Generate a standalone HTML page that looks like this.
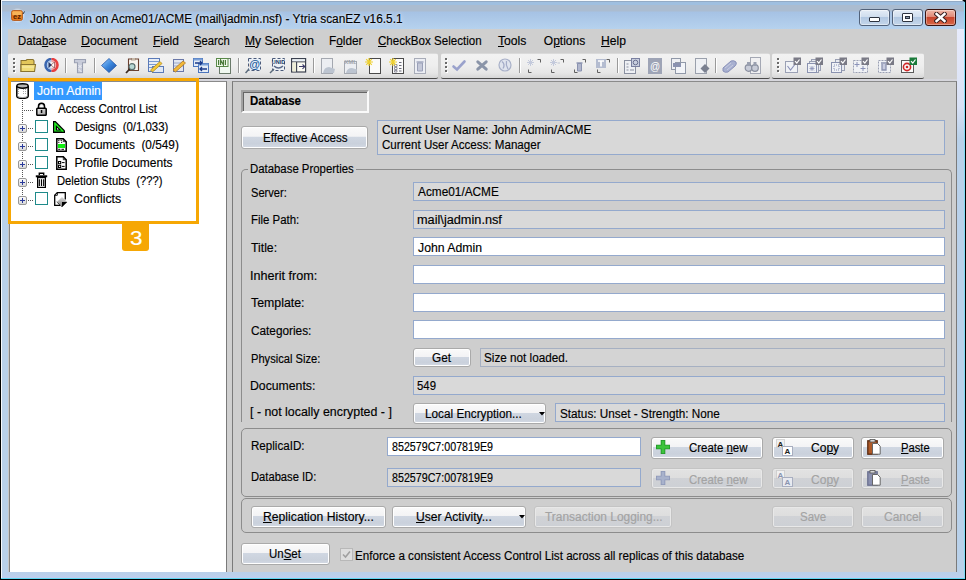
<!DOCTYPE html>
<html><head><meta charset="utf-8">
<style>
html,body{margin:0;padding:0;}
body{width:966px;height:580px;position:relative;overflow:hidden;background:#000;font-family:"Liberation Sans",sans-serif;}
.a{position:absolute;box-sizing:border-box;}
.t{-webkit-text-stroke:0.15px currentColor;position:absolute;white-space:pre;line-height:20px;transform-origin:0 0;font-family:"Liberation Sans",sans-serif;}
u{text-decoration:underline;text-underline-offset:1px;}
.btn{position:absolute;box-sizing:border-box;border:1px solid #aaaaaa;border-radius:3px;background:linear-gradient(#fafafa 0%,#f3f3f5 45%,#d0d7e2 46%,#cad1dc 80%,#d4dae4 100%);box-shadow:inset 0 0 0 1px #fff;}
.btnd{position:absolute;box-sizing:border-box;border:1px solid #c4c4c4;border-radius:3px;background:linear-gradient(#e2e2e2 0%,#dedede 46%,#d0d2d6 47%,#cdd0d5 100%);box-shadow:inset 0 0 0 1px #e8e8e8;}
.fld{position:absolute;box-sizing:border-box;border:1px solid #94a9cd;background:#fff;}
.fldd{position:absolute;box-sizing:border-box;border:1px solid #94a9cd;background:#d9d9d9;}
.grp{position:absolute;box-sizing:border-box;border:1px solid #8c8c8c;border-radius:5px;}
.tb{position:absolute;box-sizing:border-box;height:26px;top:53px;border-radius:3px 3px 2px 2px;background:linear-gradient(#dadada 0px,#dadada 1px,#f2f2f2 1px,#eeeeee 50%,#e6e6e6 80%,#d6d6d6 100%);border-bottom:1px solid #4a4a4a;}
.ic{position:absolute;}
.sep{position:absolute;top:57px;width:1px;height:17px;background:#8a8a8a;border-right:1px solid #fff;}
.grip{position:absolute;top:57px;width:3px;height:16px;background:radial-gradient(circle at 1.5px 1.5px,#5a5a5a 1px,transparent 1.4px) 0 0/3px 4px;}
</style></head><body>
<!-- window frame -->
<div class="a" style="left:1px;top:0;width:964px;height:579px;background:#b9d1ea;"></div>
<div class="a" style="left:1px;top:0;width:962px;height:1px;background:#f6f9fc;"></div>
<div class="a" style="left:1px;top:0;width:1px;height:579px;background:#f6f9fc;"></div>
<div class="a" style="left:2px;top:1px;width:962px;height:28px;background:linear-gradient(#93abc6 0px,#93abc6 1px,#9fbfe0 1px,#9fbfe0 4px,#abbcd0 4px,#abbcd0 10px,#a6c2e4 11px,#b6d2ee 28px);"></div>
<div class="a" style="left:964px;top:0;width:1px;height:579px;background:#7fdcf4;"></div>
<div class="a" style="left:1px;top:578px;width:964px;height:1px;background:#5fd8f2;"></div>
<div class="a" style="left:2px;top:572px;width:962px;height:6px;background:linear-gradient(#b9d0ea,#bcd0ec 70%,#c4ccf0);"></div>
<div class="a" style="left:962px;top:0;width:4px;height:3px;background:#000;clip-path:polygon(0 0,100% 0,100% 100%);"></div>
<div class="a" style="left:957px;top:29px;width:7px;height:110px;background:linear-gradient(rgba(240,240,255,.85),rgba(230,232,250,.7) 70%,rgba(230,232,250,0));"></div>
<!-- caption buttons -->
<div class="a" style="left:859px;top:9px;width:31px;height:17px;border:1px solid #52627a;border-radius:3px;background:linear-gradient(#e4ecf6 0%,#d0deee 45%,#b2c8e2 50%,#c4d6ea 100%);box-shadow:inset 0 0 0 1px rgba(255,255,255,.45);"></div>
<div class="a" style="left:869px;top:17px;width:11px;height:5px;border:1px solid #2e3440;border-radius:1px;background:#fff;"></div>
<div class="a" style="left:892px;top:9px;width:31px;height:17px;border:1px solid #52627a;border-radius:3px;background:linear-gradient(#e4ecf6 0%,#d0deee 45%,#b2c8e2 50%,#c4d6ea 100%);box-shadow:inset 0 0 0 1px rgba(255,255,255,.45);"></div>
<div class="a" style="left:902px;top:13px;width:11px;height:9px;border:1px solid #2e3440;border-radius:1px;background:#fff;"></div>
<div class="a" style="left:905px;top:16px;width:5px;height:3px;border:1px solid #2e3440;background:#8a98aa;"></div>
<div class="a" style="left:925px;top:9px;width:31px;height:17px;border:1px solid #3a1410;border-radius:3px;background:linear-gradient(#f0b8a8 0%,#e08a78 45%,#c8462e 50%,#d86848 100%);box-shadow:inset 0 0 0 1px rgba(255,255,255,.35);"></div>
<svg class="a" style="left:934px;top:12px" width="13" height="11" viewBox="0 0 13 11"><path d="M2.5 2 L10.5 9 M10.5 2 L2.5 9" stroke="#3a2020" stroke-width="4.4" stroke-linecap="square"/><path d="M2.5 2 L10.5 9 M10.5 2 L2.5 9" stroke="#fff" stroke-width="2.4" stroke-linecap="square"/></svg>
<!-- client -->
<div class="a" style="left:8px;top:29px;width:949px;height:543px;background:#cfcfcf;"></div>
<!-- toolbars -->
<div class="tb" style="left:8px;width:430px;"></div>
<div class="tb" style="left:441px;width:329px;"></div>
<div class="tb" style="left:772px;width:152px;"></div>
<div class="a" style="left:13px;top:58px;width:2px;height:2px;background:#6a6a6a;box-shadow:1px 1px 0 #fff;"></div>
<div class="a" style="left:13px;top:62px;width:2px;height:2px;background:#6a6a6a;box-shadow:1px 1px 0 #fff;"></div>
<div class="a" style="left:13px;top:66px;width:2px;height:2px;background:#6a6a6a;box-shadow:1px 1px 0 #fff;"></div>
<div class="a" style="left:13px;top:70px;width:2px;height:2px;background:#6a6a6a;box-shadow:1px 1px 0 #fff;"></div>
<div class="a" style="left:445px;top:58px;width:2px;height:2px;background:#6a6a6a;box-shadow:1px 1px 0 #fff;"></div>
<div class="a" style="left:445px;top:62px;width:2px;height:2px;background:#6a6a6a;box-shadow:1px 1px 0 #fff;"></div>
<div class="a" style="left:445px;top:66px;width:2px;height:2px;background:#6a6a6a;box-shadow:1px 1px 0 #fff;"></div>
<div class="a" style="left:445px;top:70px;width:2px;height:2px;background:#6a6a6a;box-shadow:1px 1px 0 #fff;"></div>
<div class="a" style="left:777px;top:58px;width:2px;height:2px;background:#6a6a6a;box-shadow:1px 1px 0 #fff;"></div>
<div class="a" style="left:777px;top:62px;width:2px;height:2px;background:#6a6a6a;box-shadow:1px 1px 0 #fff;"></div>
<div class="a" style="left:777px;top:66px;width:2px;height:2px;background:#6a6a6a;box-shadow:1px 1px 0 #fff;"></div>
<div class="a" style="left:777px;top:70px;width:2px;height:2px;background:#6a6a6a;box-shadow:1px 1px 0 #fff;"></div>
<div class="a" style="left:65px;top:58px;width:1px;height:15px;background:#9a9a9a;box-shadow:1px 0 0 #fff;"></div>
<div class="a" style="left:94px;top:58px;width:1px;height:15px;background:#9a9a9a;box-shadow:1px 0 0 #fff;"></div>
<div class="a" style="left:238px;top:58px;width:1px;height:15px;background:#9a9a9a;box-shadow:1px 0 0 #fff;"></div>
<div class="a" style="left:313px;top:58px;width:1px;height:15px;background:#9a9a9a;box-shadow:1px 0 0 #fff;"></div>
<div class="a" style="left:519px;top:58px;width:1px;height:15px;background:#9a9a9a;box-shadow:1px 0 0 #fff;"></div>
<div class="a" style="left:617px;top:58px;width:1px;height:15px;background:#9a9a9a;box-shadow:1px 0 0 #fff;"></div>
<div class="a" style="left:715px;top:58px;width:1px;height:15px;background:#9a9a9a;box-shadow:1px 0 0 #fff;"></div>
<svg class="ic" style="left:20px;top:58px" width="17" height="15" viewBox="0 0 17 15"><path d="M1 2.5 H6 L7 1.5 H13 L14 3 V13.5 H1Z" fill="#e2c65a" stroke="#8a7430" stroke-width="1.1"/><path d="M1 6.5 H15.5 L14.5 13.5 H1Z" fill="#f0dc78" stroke="#8a7430" stroke-width="1.1"/><path d="M2 9 H14" stroke="#f8eeb0" stroke-width="1"/></svg>
<svg class="ic" style="left:44px;top:58px" width="15" height="14" viewBox="0 0 15 14"><path d="M7.5 1 A6 6 0 0 0 7.5 13" fill="none" stroke="#3a66b0" stroke-width="2.6"/><path d="M7.5 3.2 A3.8 3.8 0 0 0 7.5 10.8" fill="none" stroke="#a8c8f0" stroke-width="1.6"/><path d="M7.5 1 A6 6 0 0 1 7.5 13" fill="none" stroke="#e84040" stroke-width="2.6"/><path d="M7.5 3.2 A3.8 3.8 0 0 1 7.5 10.8" fill="none" stroke="#f0a0a0" stroke-width="1.6"/><path d="M4.5 4 L8 7 L4.5 10z" fill="#2a3a6a"/><path d="M10.5 4 L7 7 L10.5 10z" fill="#fff" stroke="#803030" stroke-width=".6"/></svg>
<svg class="ic" style="left:73px;top:58px" width="14" height="16" viewBox="0 0 14 16"><path d="M1.5 1.5 H12.5 V4.8 H9.5 V14.8 H4.5 V4.8 H1.5Z" fill="#c8ccda" stroke="#9aa0b2" stroke-width="1.1"/><path d="M5.5 7 L8.5 10 M8.5 7 L5.5 10 M5.5 11 L8.5 14" stroke="#eef0f6" stroke-width="1"/></svg>
<svg class="ic" style="left:101px;top:58px" width="16" height="15" viewBox="0 0 16 15"><defs><linearGradient id="dg" x1="0" y1="0" x2="1" y2="1"><stop offset="0" stop-color="#9fd0ff"/><stop offset=".5" stop-color="#3a86dc"/><stop offset="1" stop-color="#1a4aa0"/></linearGradient></defs><path d="M8 0.5 L15.5 7.5 L8 14.5 L0.5 7.5Z" fill="url(#dg)" stroke="#2a5aa8" stroke-width=".8"/></svg>
<svg class="ic" style="left:124px;top:58px" width="16" height="16" viewBox="0 0 16 16"><path d="M4.5 1 H14.5 V12.5 H4.5 Z" fill="#f8f4ee" stroke="#6a4030" stroke-width="1.1"/><rect x="7.5" y="0" width="4" height="2" fill="#e0d8c8" stroke="#8a7060" stroke-width=".6"/><circle cx="8" cy="8.7" r="3" fill="#b8d8d4" stroke="#5a7070" stroke-width="1.2"/><path d="M5.8 11 L2 15" stroke="#3a2a20" stroke-width="1.8"/></svg>
<svg class="ic" style="left:148px;top:58px" width="16" height="15" viewBox="0 0 16 15"><rect x="0.5" y="0.5" width="11" height="13" fill="#e8eef6" stroke="#5a7ab8"/><path d="M1 3.5 H11 M1 6.5 H11 M1 9.5 H11" stroke="#7a9ad0" stroke-width="1.2"/><rect x="4.5" y="8.5" width="11" height="6" fill="#e0e8f4" stroke="#5a7ab8"/><path d="M2.5 12 L12 3.5 L14 5.5 L4.5 14 Z" fill="#f2c838" stroke="#b08a28" stroke-width=".8"/></svg>
<svg class="ic" style="left:172px;top:58px" width="15" height="15" viewBox="0 0 15 15"><rect x="1.5" y="1.5" width="10" height="12" fill="#e2e6f0" stroke="#6a78a8"/><path d="M2 5 H11 M2 8 H11" stroke="#9aa8c8"/><path d="M1 12 L11 3 L13.5 5 L3.5 14 Z" fill="#f2b838" stroke="#b07a28" stroke-width=".8"/></svg>
<svg class="ic" style="left:193px;top:58px" width="16" height="15" viewBox="0 0 16 15"><rect x="0.5" y="0.5" width="9" height="8" fill="#e4ecf6" stroke="#4a74bc"/><rect x="0.5" y="0.5" width="9" height="2" fill="#7aa0d8"/><rect x="5.5" y="5.5" width="10" height="9" fill="#e4ecf6" stroke="#4a74bc"/><rect x="5.5" y="5.5" width="10" height="2" fill="#7aa0d8"/><path d="M2 5 H9 M7 3 L9 5 L7 7" stroke="#1a3a8a" stroke-width="1.3" fill="none"/><path d="M14 11 H7 M9 9 L7 11 L9 13" stroke="#1a3a8a" stroke-width="1.3" fill="none"/></svg>
<svg class="ic" style="left:216px;top:58px" width="16" height="16" viewBox="0 0 16 16"><rect x="3.5" y="0.5" width="11" height="15" fill="#f0f8f0" stroke="#6a7a6a"/><rect x="0.5" y="0.5" width="11.5" height="8" fill="#f0faea" stroke="#5a8a4a"/><path d="M2.6 2 V7 M4.6 7 V2 L7.4 7 V2 M9.4 2 V7" stroke="#4a7a3a" stroke-width="1.2" fill="none"/></svg>
<svg class="ic" style="left:245px;top:58px" width="16" height="16" viewBox="0 0 16 16"><rect x="3.5" y="0.5" width="12" height="12" fill="#e6eef8" stroke="#4a5a7a" stroke-dasharray="3 2"/><text x="9.5" y="10" font-family="Liberation Sans" font-size="11" font-weight="700" text-anchor="middle" fill="#1a5a9a">@</text><path d="M4 11 L0.5 15" stroke="#5a6a7a" stroke-width="1.5"/></svg>
<svg class="ic" style="left:269px;top:58px" width="16" height="16" viewBox="0 0 16 16"><rect x="3.5" y="0.5" width="12" height="12" fill="#eef2f6" stroke="#4a5a7a" stroke-dasharray="3 2"/><text x="9.5" y="6" font-family="Liberation Sans" font-size="5.5" font-weight="700" text-anchor="middle" fill="#1a3a6a">UNID</text><path d="M5 8 Q9.5 12 14 8" stroke="#5a6a8a" stroke-width="1.5" fill="none"/><path d="M5 11 L1 15" stroke="#5a6a7a" stroke-width="1.5"/></svg>
<svg class="ic" style="left:291px;top:58px" width="16" height="15" viewBox="0 0 16 15"><rect x="0.6" y="0.6" width="14" height="13.4" fill="#fbfbf2" stroke="#3c4250" stroke-width="1.2"/><path d="M1 3.8 H14.6" stroke="#3c4250" stroke-width="1.1"/><rect x="1.5" y="1.4" width="12.4" height="1.8" fill="#e8f0f8"/><path d="M5.6 4 V14" stroke="#3c4250" stroke-width="1.1"/><rect x="1.5" y="4.5" width="3.4" height="9" fill="#eeeed8"/><path d="M8 8.5 H13.5 M11.5 6.5 L13.8 8.6 L11.5 10.8" stroke="#3a3a6a" stroke-width="1.1" fill="none"/></svg>
<svg class="ic" style="left:321px;top:58px" width="15" height="16" viewBox="0 0 15 16"><rect x="0.5" y="0.5" width="11" height="15" fill="#eceef2" stroke="#a4a8b0"/><path d="M2 15 Q3 9 8 9 L14 11 L13 15 Z" fill="#bcc4d0"/></svg>
<svg class="ic" style="left:344px;top:58px" width="14" height="16" viewBox="0 0 14 16"><rect x="0.5" y="3.5" width="12" height="12" fill="#eceef2" stroke="#a4a8b0"/><text x="6.5" y="6" font-family="Liberation Sans" font-size="6" font-weight="700" text-anchor="middle" fill="#a0a4ac">XML</text><path d="M2 15 Q3 10 8 10 L13 11.5 L12 15 Z" fill="#bcc4d0"/></svg>
<svg class="ic" style="left:365px;top:58px" width="17" height="16" viewBox="0 0 17 16"><rect x="4.5" y="0.5" width="11" height="15" fill="#fafafa" stroke="#4a4a4a"/><path d="M4 0 V8 M0 4 H8 M1.2 1.2 L6.8 6.8 M6.8 1.2 L1.2 6.8" stroke="#eed030" stroke-width="1.2"/></svg>
<svg class="ic" style="left:389px;top:58px" width="16" height="16" viewBox="0 0 16 16"><rect x="3.5" y="0.5" width="11" height="15" fill="#fafafa" stroke="#4a4a4a"/><path d="M5.5 6.5 H8 V8.5 H5.5Z M5.5 9.5 H8 V11.5 H5.5Z M5.5 12.5 H8 V14 H5.5Z" fill="none" stroke="#7a7a8a" stroke-width=".8"/><path d="M10 4.5 H12.5 M10 7.5 H12.5 M10 10.5 H12.5 M10 13 H12.5" stroke="#6a6a7a"/><path d="M4 0 V8 M0 4 H8 M1.2 1.2 L6.8 6.8 M6.8 1.2 L1.2 6.8" stroke="#eed030" stroke-width="1.2"/></svg>
<svg class="ic" style="left:414px;top:58px" width="12" height="16" viewBox="0 0 12 16"><rect x="0.5" y="0.5" width="11" height="15" fill="#eceef4" stroke="#a8acb8"/><path d="M2.5 4 H9.5" stroke="#9aa0b8" stroke-width="1.3"/><path d="M3.5 5 H8.5 V13 H3.5Z" fill="#c4c8d8" stroke="#9aa0b8" stroke-width="1"/></svg>
<svg class="ic" style="left:451px;top:59px" width="16" height="13" viewBox="0 0 16 13"><path d="M2.5 7.5 L6 10.5 L13.5 2.5" stroke="#9aa2cc" stroke-width="2.6" fill="none" stroke-linecap="round"/></svg>
<svg class="ic" style="left:475px;top:59px" width="14" height="13" viewBox="0 0 14 13"><path d="M2.8 2.8 L11.2 10.2 M11.2 2.8 L2.8 10.2" stroke="#8a94a8" stroke-width="3" stroke-linecap="round"/></svg>
<svg class="ic" style="left:498px;top:58px" width="14" height="14" viewBox="0 0 14 14"><circle cx="7" cy="7" r="6" fill="#e0e4ee" stroke="#a8b0c8" stroke-width="1.2"/><path d="M4 3.5 Q7.5 6.5 5 10.5 M8.5 3 Q7.5 7 10 11" stroke="#a4acc8" stroke-width="1.3" fill="none"/></svg>
<svg class="ic" style="left:526px;top:58px" width="16" height="16" viewBox="0 0 16 16"><path d="M11.5 1.5 H14.5 V4.5 M2.5 11.5 V14.5 H5.5" stroke="#606060" fill="none" stroke-width="1"/><path d="M4.5 1 V8 M1 4.5 H8 M2 2 L7 7 M7 2 L2 7" stroke="#c4cadc" stroke-width="1"/></svg>
<svg class="ic" style="left:549px;top:58px" width="16" height="16" viewBox="0 0 16 16"><path d="M11.5 1.5 H14.5 V4.5 M2.5 11.5 V14.5 H5.5" stroke="#606060" fill="none" stroke-width="1"/><path d="M4.5 1 V8 M1 4.5 H8 M2 2 L7 7 M7 2 L2 7" stroke="#c4cadc" stroke-width="1"/><path d="M8.5 5 H11" stroke="#c0c6d4"/></svg>
<svg class="ic" style="left:572px;top:58px" width="15" height="16" viewBox="0 0 15 16"><path d="M10.5 1.5 H13.5 V4.5 M2.5 11.5 V14.5 H5.5" stroke="#606060" fill="none" stroke-width="1"/><path d="M4.5 5 H10.5" stroke="#8a92b0" stroke-width="1.4"/><path d="M5.5 5.5 H9.5 V13 H5.5Z" fill="#b0b6cc" stroke="#8a92b0" stroke-width="1"/></svg>
<svg class="ic" style="left:595px;top:58px" width="16" height="16" viewBox="0 0 16 16"><path d="M11.5 1.5 H14.5 V4.5 M2.5 11.5 V14.5 H5.5" stroke="#606060" fill="none" stroke-width="1"/><rect x="1" y="1" width="10" height="9" fill="#b4bcd0"/><path d="M3 3 H9 M6 3 V8.5" stroke="#fff" stroke-width="1.7"/></svg>
<svg class="ic" style="left:624px;top:58px" width="16" height="16" viewBox="0 0 16 16"><rect x="0.5" y="2.5" width="11" height="13" fill="#eef0f4" stroke="#8a90a0"/><path d="M2.5 6 H4.5 M2.5 9 H4.5 M2.5 12 H4.5 M6 12 H10" stroke="#8a90a0"/><rect x="7.5" y="0.5" width="8" height="8" fill="#c8cede" stroke="#7a80a0"/><circle cx="11.5" cy="4.5" r="2.3" fill="none" stroke="#6a7090"/></svg>
<svg class="ic" style="left:648px;top:58px" width="14" height="16" viewBox="0 0 14 16"><rect x="0" y="0" width="14" height="16" fill="#9ea4b6"/><text x="7" y="11.5" font-family="Liberation Sans" font-size="10" text-anchor="middle" fill="#fff">@</text></svg>
<svg class="ic" style="left:671px;top:58px" width="15" height="16" viewBox="0 0 15 16"><rect x="0.5" y="0.5" width="9" height="11" fill="#eef0f4" stroke="#9098a8"/><rect x="4.5" y="4.5" width="10" height="11" fill="#f2f4f8" stroke="#9098a8"/><rect x="2" y="5" width="8" height="4" fill="#8a92b0"/></svg>
<svg class="ic" style="left:695px;top:58px" width="15" height="16" viewBox="0 0 15 16"><rect x="0.5" y="0.5" width="11" height="15" fill="#eef0f4" stroke="#9aa0ac"/><path d="M10 6 L14.5 10.5 L10 15 L5.5 10.5Z" fill="#7a8090"/></svg>
<svg class="ic" style="left:722px;top:59px" width="16" height="14" viewBox="0 0 16 14"><path d="M1 9 L9 2 Q12 1 14 3 Q15 5 13 7 L6 13 Q3 14 1 12 Z" fill="#a8b0d0" stroke="#8890b8"/><path d="M3 9 L9 4 M5 11 L11 6" stroke="#c8cce0"/></svg>
<svg class="ic" style="left:744px;top:57px" width="17" height="17" viewBox="0 0 17 17"><rect x="6.5" y="0.5" width="10" height="16" fill="#f0f0f2" stroke="#a4a8b4"/><circle cx="4.5" cy="11" r="3.3" fill="#c8ccd8" stroke="#8a90a0" stroke-width="1.2"/><circle cx="11" cy="11" r="3.3" fill="#c8ccd8" stroke="#8a90a0" stroke-width="1.2"/><rect x="3" y="5" width="3" height="4" fill="#9aa0b0"/><rect x="9.5" y="5" width="3" height="4" fill="#9aa0b0"/></svg>
<svg class="ic" style="left:785px;top:57px" width="16" height="17" viewBox="0 0 16 17"><rect x="0.5" y="4.5" width="12" height="11" fill="#f0f2f6" stroke="#9aa0b4"/><path d="M2.5 9 L5.5 13 L11 6" stroke="#8a90b8" fill="none" stroke-width="1.1"/><rect x="8.5" y="0.5" width="7.5" height="7.5" fill="#7a7a86"/><path d="M10 4.2 L11.8 6 L14.5 2.5" stroke="#fff" stroke-width="1.2" fill="none"/></svg>
<svg class="ic" style="left:807px;top:57px" width="16" height="17" viewBox="0 0 16 17"><rect x="4.5" y="2.5" width="9" height="11" fill="#e8eaf0" stroke="#9aa0b4"/><rect x="2.5" y="4.5" width="9" height="11" fill="#eceef2" stroke="#9aa0b4"/><rect x="0.5" y="6.5" width="9" height="9" fill="#f0f2f6" stroke="#8a92b0"/><path d="M5 9 V14 M2.5 11.5 H7.5 M3 9.5 L7 13.5 M7 9.5 L3 13.5" stroke="#8a92b8" stroke-width=".8"/><rect x="8.5" y="0.5" width="7.5" height="7.5" fill="#7a7a86"/><path d="M10 4.2 L11.8 6 L14.5 2.5" stroke="#fff" stroke-width="1.2" fill="none"/></svg>
<svg class="ic" style="left:831px;top:57px" width="16" height="17" viewBox="0 0 16 17"><rect x="4.5" y="2.5" width="9" height="11" fill="#e8eaf0" stroke="#9aa0b4"/><rect x="0.5" y="5.5" width="10" height="10" fill="#f0f2f6" stroke="#8a92b0"/><rect x="3" y="8" width="5" height="5" fill="none" stroke="#8a92b8" stroke-dasharray="1 1"/><rect x="8.5" y="0.5" width="7.5" height="7.5" fill="#7a7a86"/><path d="M10 4.2 L11.8 6 L14.5 2.5" stroke="#fff" stroke-width="1.2" fill="none"/></svg>
<svg class="ic" style="left:853px;top:57px" width="16" height="17" viewBox="0 0 16 17"><rect x="0.5" y="3.5" width="14" height="12" fill="#f0f2f6" stroke="#9aa0b4" stroke-dasharray="2 1"/><path d="M4 5 V10 M1.5 7.5 H6.5 M10 9 V14 M7.5 11.5 H12.5" stroke="#8a92b8" stroke-width="1"/><rect x="8.5" y="0.5" width="7.5" height="7.5" fill="#7a7a86"/><path d="M10 4.2 L11.8 6 L14.5 2.5" stroke="#fff" stroke-width="1.2" fill="none"/></svg>
<svg class="ic" style="left:878px;top:57px" width="16" height="17" viewBox="0 0 16 17"><rect x="0.5" y="3.5" width="12" height="12" fill="#f0f2f6" stroke="#9aa0b4" stroke-dasharray="2 1"/><path d="M3 6 H9 M4 7 V13 H8 V7" stroke="#8a92b0" stroke-width="1.3" fill="#c8cce0"/><rect x="8.5" y="0.5" width="7.5" height="7.5" fill="#7a7a86"/><path d="M10 4.2 L11.8 6 L14.5 2.5" stroke="#fff" stroke-width="1.2" fill="none"/></svg>
<svg class="ic" style="left:901px;top:57px" width="16" height="17" viewBox="0 0 16 17"><rect x="0.5" y="3.5" width="12" height="12" fill="#fafafa" stroke="#5a5a5a"/><circle cx="6" cy="10" r="3.6" fill="none" stroke="#d02828" stroke-width="1.6"/><circle cx="6" cy="10" r="1.3" fill="#d02828"/><rect x="8.5" y="0.5" width="7.5" height="7.5" fill="#1a7a3a"/><path d="M10 4.2 L11.8 6 L14.5 2.5" stroke="#fff" stroke-width="1.2" fill="none"/></svg>
<!-- tree panel -->
<div class="a" style="left:8px;top:79px;width:949px;height:2px;background:#d6d6dc;"></div>
<div class="a" style="left:8px;top:81px;width:1px;height:491px;background:#c8c8c8;"></div>
<div class="a" style="left:9px;top:81px;width:218px;height:491px;background:#fff;border-left:1px solid #858585;border-top:1px solid #8a8a8a;border-right:1px solid #7a7a7a;"></div>
<div class="a" style="left:227px;top:81px;width:5px;height:491px;background:#d0d0d0;"></div>
<div class="a" style="left:232px;top:81px;width:725px;height:491px;background:#cecece;border-left:1px solid #7a7a7a;border-top:1px solid #8a8a8a;border-right:1px solid #7a7a7a;"></div>
<!-- tree -->
<div class="a" style="left:34px;top:82px;width:68px;height:18px;background:#3399ff;"></div>
<svg class="ic" style="left:16px;top:83px" width="13" height="16" viewBox="0 0 13 16"><path d="M0.8 3 V13 Q0.8 15.4 6.5 15.4 Q12.2 15.4 12.2 13 V3" fill="#fff" stroke="#000" stroke-width="1.5"/><path d="M1.5 13 Q2 14.5 6.5 14.6 Q11 14.5 11.5 13" fill="none" stroke="#999" stroke-width="1"/><ellipse cx="6.5" cy="3" rx="5.7" ry="2.2" fill="#b4b4b4" stroke="#000" stroke-width="1.5"/><path d="M2.5 6 V12 M7.5 6 V12 M9.5 6 V12" stroke="#aaa" stroke-dasharray="1 1"/></svg>
<svg class="ic" style="left:36px;top:102px" width="11" height="14" viewBox="0 0 11 14"><path d="M2.6 6 V4.2 A2.9 2.9 0 0 1 8.4 4.2 V6" fill="none" stroke="#000" stroke-width="1.7"/><path d="M3.8 6 V4.4 A1.7 1.7 0 0 1 7.2 4.4 V6" fill="none" stroke="#ddd" stroke-width=".7"/><defs><linearGradient id="lk" x1="0" y1="0" x2="1" y2="1"><stop offset="0" stop-color="#eee"/><stop offset="1" stop-color="#999"/></linearGradient></defs><rect x="0.8" y="6.3" width="9.4" height="7" rx=".8" fill="url(#lk)" stroke="#000" stroke-width="1.5"/><rect x="4.8" y="8" width="1.5" height="3" fill="#000"/></svg>
<div class="a" style="left:22px;top:100px;width:1px;height:100px;background:repeating-linear-gradient(#555 0 1px,transparent 1px 2px);"></div>
<div class="a" style="left:24px;top:110px;width:10px;height:1px;background:repeating-linear-gradient(90deg,#555 0 1px,transparent 1px 2px);"></div>
<div class="a" style="left:28px;top:128px;width:6px;height:1px;background:repeating-linear-gradient(90deg,#555 0 1px,transparent 1px 2px);"></div>
<div class="a" style="left:28px;top:146px;width:6px;height:1px;background:repeating-linear-gradient(90deg,#555 0 1px,transparent 1px 2px);"></div>
<div class="a" style="left:28px;top:164px;width:6px;height:1px;background:repeating-linear-gradient(90deg,#555 0 1px,transparent 1px 2px);"></div>
<div class="a" style="left:28px;top:182px;width:6px;height:1px;background:repeating-linear-gradient(90deg,#555 0 1px,transparent 1px 2px);"></div>
<div class="a" style="left:28px;top:200px;width:6px;height:1px;background:repeating-linear-gradient(90deg,#555 0 1px,transparent 1px 2px);"></div>
<div class="a" style="left:18px;top:124px;width:9px;height:9px;border:1px solid #979797;border-radius:2px;background:linear-gradient(#fafafa,#d8d8d8);"></div>
<div class="a" style="left:20px;top:128px;width:5px;height:1px;background:#2a3a9a;"></div><div class="a" style="left:22px;top:126px;width:1px;height:5px;background:#2a3a9a;"></div>
<div class="a" style="left:18px;top:142px;width:9px;height:9px;border:1px solid #979797;border-radius:2px;background:linear-gradient(#fafafa,#d8d8d8);"></div>
<div class="a" style="left:20px;top:146px;width:5px;height:1px;background:#2a3a9a;"></div><div class="a" style="left:22px;top:144px;width:1px;height:5px;background:#2a3a9a;"></div>
<div class="a" style="left:18px;top:160px;width:9px;height:9px;border:1px solid #979797;border-radius:2px;background:linear-gradient(#fafafa,#d8d8d8);"></div>
<div class="a" style="left:20px;top:164px;width:5px;height:1px;background:#2a3a9a;"></div><div class="a" style="left:22px;top:162px;width:1px;height:5px;background:#2a3a9a;"></div>
<div class="a" style="left:18px;top:178px;width:9px;height:9px;border:1px solid #979797;border-radius:2px;background:linear-gradient(#fafafa,#d8d8d8);"></div>
<div class="a" style="left:20px;top:182px;width:5px;height:1px;background:#2a3a9a;"></div><div class="a" style="left:22px;top:180px;width:1px;height:5px;background:#2a3a9a;"></div>
<div class="a" style="left:18px;top:196px;width:9px;height:9px;border:1px solid #979797;border-radius:2px;background:linear-gradient(#fafafa,#d8d8d8);"></div>
<div class="a" style="left:20px;top:200px;width:5px;height:1px;background:#2a3a9a;"></div><div class="a" style="left:22px;top:198px;width:1px;height:5px;background:#2a3a9a;"></div>
<div class="a" style="left:35px;top:120px;width:13px;height:13px;border:1.5px solid #1e8a8a;background:#fff;"></div>
<div class="a" style="left:35px;top:138px;width:13px;height:13px;border:1.5px solid #1e8a8a;background:#fff;"></div>
<div class="a" style="left:35px;top:156px;width:13px;height:13px;border:1.5px solid #1e8a8a;background:#fff;"></div>
<div class="a" style="left:35px;top:192px;width:13px;height:13px;border:1.5px solid #1e8a8a;background:#fff;"></div>
<svg class="ic" style="left:53px;top:121px" width="12" height="12" viewBox="0 0 12 12"><path d="M0 0 H2.6 L12 9.4 V12 H0 Z" fill="#000"/><path d="M1.2 1.3 H2.1 L10.8 10 V10.8 H1.2 Z" fill="#22ee22"/><path d="M2.8 4 L8.4 9.6 H2.8 Z" fill="#000"/><path d="M4 6.8 L5.8 8.6 H4Z" fill="#fff"/><path d="M2 10.8 V10 M4 10.8 V10 M6 10.8 V10 M8 10.8 V10" stroke="#000" stroke-width=".8"/></svg>
<svg class="ic" style="left:56px;top:138px" width="11" height="14" viewBox="0 0 11 14"><path d="M0.8 0.8 H7.3 L10.2 3.7 V13.2 H0.8 Z" fill="#fff" stroke="#000" stroke-width="1.5"/><path d="M7.3 0.8 V3.7 H10.2" fill="none" stroke="#000" stroke-width=".8"/><rect x="2" y="6" width="7" height="4" fill="#11ee11"/><path d="M2.2 2.4 H3.4 M4.6 2.4 H5.8 M2.2 4.3 H3.4 M5 4.3 H6.2 M2.2 11.3 H4.4 M5.4 11.3 H8" stroke="#000" stroke-width="1"/></svg>
<svg class="ic" style="left:56px;top:156px" width="11" height="14" viewBox="0 0 11 14"><path d="M0.8 0.8 H7.3 L10.2 3.7 V13.2 H0.8 Z" fill="#fff" stroke="#000" stroke-width="1.5"/><path d="M7.3 0.8 V3.7 H10.2" fill="none" stroke="#000" stroke-width=".8"/><rect x="2.5" y="5.5" width="2.2" height="2.2" fill="none" stroke="#000" stroke-width="1"/><rect x="2.5" y="9.3" width="2.2" height="2.2" fill="none" stroke="#000" stroke-width="1"/><path d="M5.8 6.6 H8.6 M5.8 10.4 H8.6" stroke="#000" stroke-width="1"/></svg>
<svg class="ic" style="left:35px;top:172px" width="13" height="17" viewBox="0 0 13 17"><path d="M4.3 3 V1.2 H8.7 V3" fill="none" stroke="#000" stroke-width="1.4"/><path d="M0.8 4.3 H12.2" stroke="#000" stroke-width="2"/><path d="M2 5 H11 V16 H2 Z" fill="#000"/><rect x="3.2" y="6.2" width="6.6" height="8.6" fill="#fff"/><path d="M4.3 7.2 V14 M6.5 7.2 V14 M8.7 7.2 V14" stroke="#000" stroke-width="1.2"/></svg>
<svg class="ic" style="left:54px;top:192px" width="14" height="15" viewBox="0 0 14 15"><path d="M3.3 0.7 H11.3 V13.3 H0.7 V3.3 Z" fill="#fff"/><path d="M6 13.3 H0.7 V3.3 L3.3 0.7 H11.3 V7.5" fill="none" stroke="#000" stroke-width="1.3"/><path d="M0.7 3.3 H3.3 V0.7 Z" fill="#e8e8e8" stroke="#000" stroke-width=".9"/><defs><linearGradient id="cf" x1="0" y1="0" x2="0" y2="1"><stop offset="0" stop-color="#d8d8d8"/><stop offset="1" stop-color="#808080"/></linearGradient></defs><path d="M8 5 L13.2 10 L8 15 L2.8 10Z" fill="url(#cf)"/><path d="M8 10 H13.2 L8 15Z" fill="#000"/><path d="M2.8 10 L8 15" stroke="#000" stroke-width="1" stroke-dasharray="1 .7"/></svg>
<div class="a" style="left:10px;top:8px;width:15px;height:15px;border-radius:4px;background:radial-gradient(#fff 40%,rgba(255,255,255,0) 72%);opacity:.8"></div>
<svg class="ic" style="left:11px;top:9px" width="14" height="13" viewBox="0 0 14 13"><rect x="0.5" y="1.5" width="11" height="10" rx="2" fill="#e47a1c" stroke="#b05010" stroke-width=".8"/><rect x="1.3" y="2.3" width="9.4" height="4" rx="1" fill="#f8b458"/><text x="6" y="10" font-family="Liberation Sans" font-size="7.5" font-weight="700" text-anchor="middle" fill="#5a2200">ez</text><path d="M12 5 L13.5 2.5" stroke="#333" stroke-width="1"/></svg>
<!-- right panel content -->
<div class="a" style="left:241px;top:90px;width:128px;height:23px;background:#d6d6d6;border-top:2px solid #a2a2a2;border-left:2px solid #a2a2a2;border-bottom:2px solid #fafafa;border-right:2px solid #fafafa;box-shadow:inset 1px 1px 0 #666;"></div>
<div class="btn" style="left:241px;top:126px;width:127px;height:23px;"></div>
<div class="a" style="left:377px;top:120px;width:568px;height:35px;border:1px solid #94a9cd;background:#d8d8d8;"></div>
<div class="grp" style="left:241px;top:169px;width:711px;height:253px;border-bottom:none;border-radius:5px 5px 0 0;"></div>
<div class="a" style="left:248px;top:163px;width:108px;height:12px;background:#cecece;"></div>
<div class="fldd" style="left:413px;top:182px;width:532px;height:19px;"></div>
<div class="fldd" style="left:413px;top:210px;width:532px;height:19px;"></div>
<div class="fld" style="left:413px;top:237px;width:532px;height:19px;"></div>
<div class="fld" style="left:413px;top:265px;width:532px;height:19px;"></div>
<div class="fld" style="left:413px;top:293px;width:532px;height:19px;"></div>
<div class="fld" style="left:413px;top:320px;width:532px;height:19px;"></div>
<div class="btn" style="left:413px;top:348px;width:58px;height:19px;"></div>
<div class="a" style="left:480px;top:348px;width:465px;height:19px;border:1px solid #a6b0c2;background:#d4d4d4;"></div>
<div class="fldd" style="left:413px;top:376px;width:532px;height:19px;"></div>
<div class="btn" style="left:413px;top:403px;width:133px;height:21px;"></div>
<div class="fldd" style="left:555px;top:403px;width:390px;height:19px;"></div>
<div class="grp" style="left:241px;top:428px;width:711px;height:69px;"></div>
<div class="fld" style="left:387px;top:437px;width:254px;height:19px;"></div>
<div class="fldd" style="left:387px;top:468px;width:254px;height:19px;"></div>
<div class="btn" style="left:651px;top:437px;width:112px;height:22px;"></div>
<div class="btn" style="left:772px;top:437px;width:82px;height:22px;"></div>
<div class="btn" style="left:861px;top:437px;width:83px;height:22px;"></div>
<div class="btnd" style="left:651px;top:468px;width:112px;height:21px;"></div>
<div class="btnd" style="left:772px;top:468px;width:82px;height:21px;"></div>
<div class="btnd" style="left:861px;top:468px;width:83px;height:21px;"></div>
<div class="grp" style="left:241px;top:498px;width:711px;height:35px;"></div>
<div class="btn" style="left:251px;top:506px;width:135px;height:22px;"></div>
<div class="btn" style="left:392px;top:506px;width:134px;height:22px;"></div>
<div class="btnd" style="left:534px;top:506px;width:138px;height:22px;"></div>
<div class="btnd" style="left:772px;top:506px;width:82px;height:22px;"></div>
<div class="btnd" style="left:861px;top:506px;width:83px;height:22px;"></div>
<div class="btn" style="left:241px;top:543px;width:89px;height:22px;"></div>
<div class="a" style="left:340px;top:548px;width:13px;height:13px;border:1px solid #b8b8b8;background:#dedede;"></div>
<svg class="a" style="left:341px;top:549px" width="11" height="11"><path d="M2 5.5 L4.5 8 L9 2.5" stroke="#a0a0a0" stroke-width="1.6" fill="none"/></svg>
<!-- dropdown arrows -->
<svg class="a" style="left:538.5px;top:412px" width="6" height="3.5"><path d="M0 0 H6 L3 3.5 Z" fill="#000"/></svg>
<svg class="a" style="left:518.5px;top:515px" width="6" height="3.5"><path d="M0 0 H6 L3 3.5 Z" fill="#000"/></svg>
<svg class="ic" style="left:655px;top:439px" width="16" height="16" viewBox="0 0 16 16"><path d="M8 1 V15 M1 8 H15" stroke="#23962a" stroke-width="4.6"/><path d="M8 1.8 V14.2 M1.8 8 H14.2" stroke="#3cc43c" stroke-width="2.8"/></svg>
<svg class="ic" style="left:655px;top:470px" width="16" height="16" viewBox="0 0 16 16"><path d="M8 1 V15 M1 8 H15" stroke="#8e98b8" stroke-width="4.6"/><path d="M8 1.8 V14.2 M1.8 8 H14.2" stroke="#a8b2cc" stroke-width="2.8"/></svg>
<svg class="ic" style="left:776px;top:439px" width="17" height="17" viewBox="0 0 17 17"><rect x="0.5" y="0.5" width="8" height="8" fill="#f0f0f0" stroke="#b8b8b8" stroke-dasharray="1 1"/><text x="4.5" y="7.5" font-family="Liberation Sans" font-size="8" font-weight="700" text-anchor="middle" fill="#222">A</text><rect x="6.5" y="7.5" width="10" height="9" fill="#fff" stroke="#a8aec0"/><text x="11.5" y="15" font-family="Liberation Sans" font-size="8" font-weight="700" text-anchor="middle" fill="#222">A</text></svg>
<svg class="ic" style="left:776px;top:470px" width="17" height="17" viewBox="0 0 17 17"><rect x="0.5" y="0.5" width="8" height="8" fill="#f0f0f0" stroke="#b8b8b8" stroke-dasharray="1 1"/><text x="4.5" y="7.5" font-family="Liberation Sans" font-size="8" font-weight="700" text-anchor="middle" fill="#8a94b0">A</text><rect x="6.5" y="7.5" width="10" height="9" fill="#e8eaf0" stroke="#a8aec0"/><text x="11.5" y="15" font-family="Liberation Sans" font-size="8" font-weight="700" text-anchor="middle" fill="#8a94b0">A</text></svg>
<svg class="ic" style="left:867px;top:439px" width="14" height="16" viewBox="0 0 14 16"><rect x="0.8" y="1.8" width="9.4" height="13.4" fill="#b05a28" stroke="#5a2a10" stroke-width="1.3"/><path d="M5.5 4.5 H10.5 L13.2 7.2 V15.2 H5.5Z" fill="#fff" stroke="#666" stroke-width="1"/><rect x="3" y="0.5" width="5" height="2.5" fill="#d8d8d8" stroke="#555" stroke-width=".8"/></svg>
<svg class="ic" style="left:867px;top:470px" width="14" height="16" viewBox="0 0 14 16"><rect x="0.8" y="1.8" width="9.4" height="13.4" fill="#8a90b0" stroke="#6a7090" stroke-width="1.3"/><path d="M5.5 4.5 H10.5 L13.2 7.2 V15.2 H5.5Z" fill="#fff" stroke="#666" stroke-width="1"/><rect x="3" y="0.5" width="5" height="2.5" fill="#d8d8d8" stroke="#555" stroke-width=".8"/></svg>
<!-- orange overlay -->
<div class="a" style="left:8px;top:78px;width:191px;height:146px;border:3px solid #f6a704;"></div>
<div class="a" style="left:122px;top:224px;width:27px;height:27px;background:#f6a704;border-radius:0 0 3px 3px;"></div>
<div class='t' style='left:30.40px;top:9.00px;font-size:12.0px;font-weight:400;color:#000;transform:scaleX(0.9875);text-shadow:0 0 5px rgba(255,255,255,.75),0 0 2px rgba(255,255,255,.6);'>John Admin on Acme01/ACME (mail\jadmin.nsf) - Ytria scanEZ v16.5.1</div>
<div class='t' style='left:17.86px;top:31.00px;font-size:12.0px;font-weight:400;color:#000;transform:scaleX(0.9420);'>Data<u>b</u>ase</div>
<div class='t' style='left:80.97px;top:31.00px;font-size:12.0px;font-weight:400;color:#000;transform:scaleX(1.0315);'><u>D</u>ocument</div>
<div class='t' style='left:153.40px;top:31.00px;font-size:12.0px;font-weight:400;color:#000;transform:scaleX(0.9958);'><u>F</u>ield</div>
<div class='t' style='left:194.46px;top:31.00px;font-size:12.0px;font-weight:400;color:#000;transform:scaleX(0.9389);'><u>S</u>earch</div>
<div class='t' style='left:245.00px;top:31.00px;font-size:12.0px;font-weight:400;color:#000;transform:scaleX(1.0045);'><u>M</u>y Selection</div>
<div class='t' style='left:329.22px;top:31.00px;font-size:12.0px;font-weight:400;color:#000;transform:scaleX(0.9848);'>F<u>o</u>lder</div>
<div class='t' style='left:378.03px;top:31.00px;font-size:12.0px;font-weight:400;color:#000;transform:scaleX(0.9651);'><u>C</u>heckBox Selection</div>
<div class='t' style='left:498.30px;top:31.00px;font-size:12.0px;font-weight:400;color:#000;transform:scaleX(1.0143);'><u>T</u>ools</div>
<div class='t' style='left:543.80px;top:31.00px;font-size:12.0px;font-weight:400;color:#000;transform:scaleX(1.0000);'>O<u>p</u>tions</div>
<div class='t' style='left:600.89px;top:31.00px;font-size:12.0px;font-weight:400;color:#000;transform:scaleX(1.0087);'><u>H</u>elp</div>
<div class='t' style='left:36.50px;top:81.00px;font-size:12.0px;font-weight:400;color:#fff;transform:scaleX(1.0194);'>John Admin</div>
<div class='t' style='left:57.50px;top:99.00px;font-size:12.0px;font-weight:400;color:#000;transform:scaleX(0.9641);'>Access Control List</div>
<div class='t' style='left:74.55px;top:117.00px;font-size:12.0px;font-weight:400;color:#000;transform:scaleX(0.9521);'>Designs  (0/1,033)</div>
<div class='t' style='left:74.51px;top:135.00px;font-size:12.0px;font-weight:400;color:#000;transform:scaleX(0.9856);'>Documents  (0/549)</div>
<div class='t' style='left:74.50px;top:153.00px;font-size:12.0px;font-weight:400;color:#000;transform:scaleX(1.0000);'>Profile Documents</div>
<div class='t' style='left:56.56px;top:171.00px;font-size:12.0px;font-weight:400;color:#000;transform:scaleX(0.9351);'>Deletion Stubs  (???)</div>
<div class='t' style='left:74.48px;top:189.00px;font-size:12.0px;font-weight:400;color:#000;transform:scaleX(1.0244);'>Conflicts</div>
<div class='t' style='left:249.85px;top:91.00px;font-size:12.0px;font-weight:700;color:#000;transform:scaleX(0.9538);'>Database</div>
<div class='t' style='left:262.53px;top:128.00px;font-size:12.0px;font-weight:400;color:#000;transform:scaleX(0.9709);'>Effective Access</div>
<div class='t' style='left:381.51px;top:120.00px;font-size:12.0px;font-weight:400;color:#000;transform:scaleX(0.9905);'>Current User Name: John Admin/ACME</div>
<div class='t' style='left:381.53px;top:135.00px;font-size:12.0px;font-weight:400;color:#000;transform:scaleX(0.9663);'>Current User Access: Manager</div>
<div class='t' style='left:249.85px;top:159.00px;font-size:12.0px;font-weight:400;color:#000;transform:scaleX(0.9481);'>Database Properties</div>
<div class='t' style='left:250.58px;top:183.00px;font-size:12.0px;font-weight:400;color:#000;transform:scaleX(0.9243);'>Server:</div>
<div class='t' style='left:250.55px;top:210.00px;font-size:12.0px;font-weight:400;color:#000;transform:scaleX(0.9510);'>File Path:</div>
<div class='t' style='left:250.90px;top:238.00px;font-size:12.0px;font-weight:400;color:#000;transform:scaleX(1.0200);'>Title:</div>
<div class='t' style='left:250.05px;top:266.00px;font-size:12.0px;font-weight:400;color:#000;transform:scaleX(1.0500);'>Inherit from:</div>
<div class='t' style='left:251.20px;top:293.00px;font-size:12.0px;font-weight:400;color:#000;transform:scaleX(1.0275);'>Template:</div>
<div class='t' style='left:250.52px;top:321.00px;font-size:12.0px;font-weight:400;color:#000;transform:scaleX(0.9831);'>Categories:</div>
<div class='t' style='left:250.57px;top:349.00px;font-size:12.0px;font-weight:400;color:#000;transform:scaleX(0.9274);'>Physical Size:</div>
<div class='t' style='left:250.48px;top:376.00px;font-size:12.0px;font-weight:400;color:#000;transform:scaleX(1.0210);'>Documents:</div>
<div class='t' style='left:250.47px;top:402.00px;font-size:12.0px;font-weight:400;color:#000;transform:scaleX(1.0324);'>[ - not locally encrypted - ]</div>
<div class='t' style='left:418.00px;top:182.00px;font-size:12.0px;font-weight:400;color:#000;transform:scaleX(0.9854);'>Acme01/ACME</div>
<div class='t' style='left:416.94px;top:210.00px;font-size:12.0px;font-weight:400;color:#000;transform:scaleX(1.0608);'>mail\jadmin.nsf</div>
<div class='t' style='left:418.00px;top:238.00px;font-size:12.0px;font-weight:400;color:#000;transform:scaleX(1.0210);'>John Admin</div>
<div class='t' style='left:432.02px;top:348.00px;font-size:12.0px;font-weight:400;color:#000;transform:scaleX(0.9833);'>Get</div>
<div class='t' style='left:484.32px;top:348.00px;font-size:12.0px;font-weight:400;color:#000;transform:scaleX(0.9762);'>Size not loaded.</div>
<div class='t' style='left:416.65px;top:376.00px;font-size:12.0px;font-weight:400;color:#000;transform:scaleX(0.9474);'>549</div>
<div class='t' style='left:424.92px;top:404.00px;font-size:12.0px;font-weight:400;color:#000;transform:scaleX(0.9804);'>Local Encryption...</div>
<div class='t' style='left:559.62px;top:404.00px;font-size:12.0px;font-weight:400;color:#000;transform:scaleX(0.9778);'>Status: Unset - Strength: None</div>
<div class='t' style='left:250.53px;top:436.00px;font-size:12.0px;font-weight:400;color:#000;transform:scaleX(0.9660);'>ReplicaID:</div>
<div class='t' style='left:250.57px;top:467.00px;font-size:12.0px;font-weight:400;color:#000;transform:scaleX(0.9324);'>Database ID:</div>
<div class='t' style='left:391.80px;top:437.00px;font-size:12.0px;font-weight:400;color:#000;transform:scaleX(0.8903);'>852579C7:007819E9</div>
<div class='t' style='left:391.80px;top:468.00px;font-size:12.0px;font-weight:400;color:#000;transform:scaleX(0.8903);'>852579C7:007819E9</div>
<div class='t' style='left:688.75px;top:438.00px;font-size:12.0px;font-weight:400;color:#000;transform:scaleX(0.9508);'>Create <u>n</u>ew</div>
<div class='t' style='left:810.60px;top:438.00px;font-size:12.0px;font-weight:400;color:#000;transform:scaleX(1.0037);'>Co<u>p</u>y</div>
<div class='t' style='left:900.77px;top:438.00px;font-size:12.0px;font-weight:400;color:#000;transform:scaleX(0.9345);'><u>P</u>aste</div>
<div class='t' style='left:688.75px;top:470.00px;font-size:12.0px;font-weight:400;color:#a3a3a3;transform:scaleX(0.9508);'>Create <u>n</u>ew</div>
<div class='t' style='left:810.60px;top:470.00px;font-size:12.0px;font-weight:400;color:#a3a3a3;transform:scaleX(1.0037);'>Co<u>p</u>y</div>
<div class='t' style='left:900.77px;top:470.00px;font-size:12.0px;font-weight:400;color:#a3a3a3;transform:scaleX(0.9345);'><u>P</u>aste</div>
<div class='t' style='left:262.88px;top:507.00px;font-size:12.0px;font-weight:400;color:#000;transform:scaleX(1.0159);'><u>R</u>eplication History...</div>
<div class='t' style='left:415.59px;top:507.00px;font-size:12.0px;font-weight:400;color:#000;transform:scaleX(1.0082);'><u>U</u>ser Activity...</div>
<div class='t' style='left:544.60px;top:507.00px;font-size:12.0px;font-weight:400;color:#a3a3a3;transform:scaleX(0.9949);'>Transaction Logging...</div>
<div class='t' style='left:799.64px;top:507.00px;font-size:12.0px;font-weight:400;color:#a3a3a3;transform:scaleX(0.9577);'>Save</div>
<div class='t' style='left:884.00px;top:507.00px;font-size:12.0px;font-weight:400;color:#a3a3a3;transform:scaleX(0.9972);'>Cancel</div>
<div class='t' style='left:269.14px;top:544.00px;font-size:12.0px;font-weight:400;color:#000;transform:scaleX(0.9562);'>Un<u>S</u>et</div>
<div class='t' style='left:355.33px;top:546.00px;font-size:12.0px;font-weight:400;color:#000;transform:scaleX(0.9710);'>Enforce a consistent Access Control List across all replicas of this database</div>
<div class='t' style='left:129.58px;top:228.00px;font-size:20px;font-weight:400;color:#fff;transform:scaleX(1.1222);'>3</div>
</body></html>
